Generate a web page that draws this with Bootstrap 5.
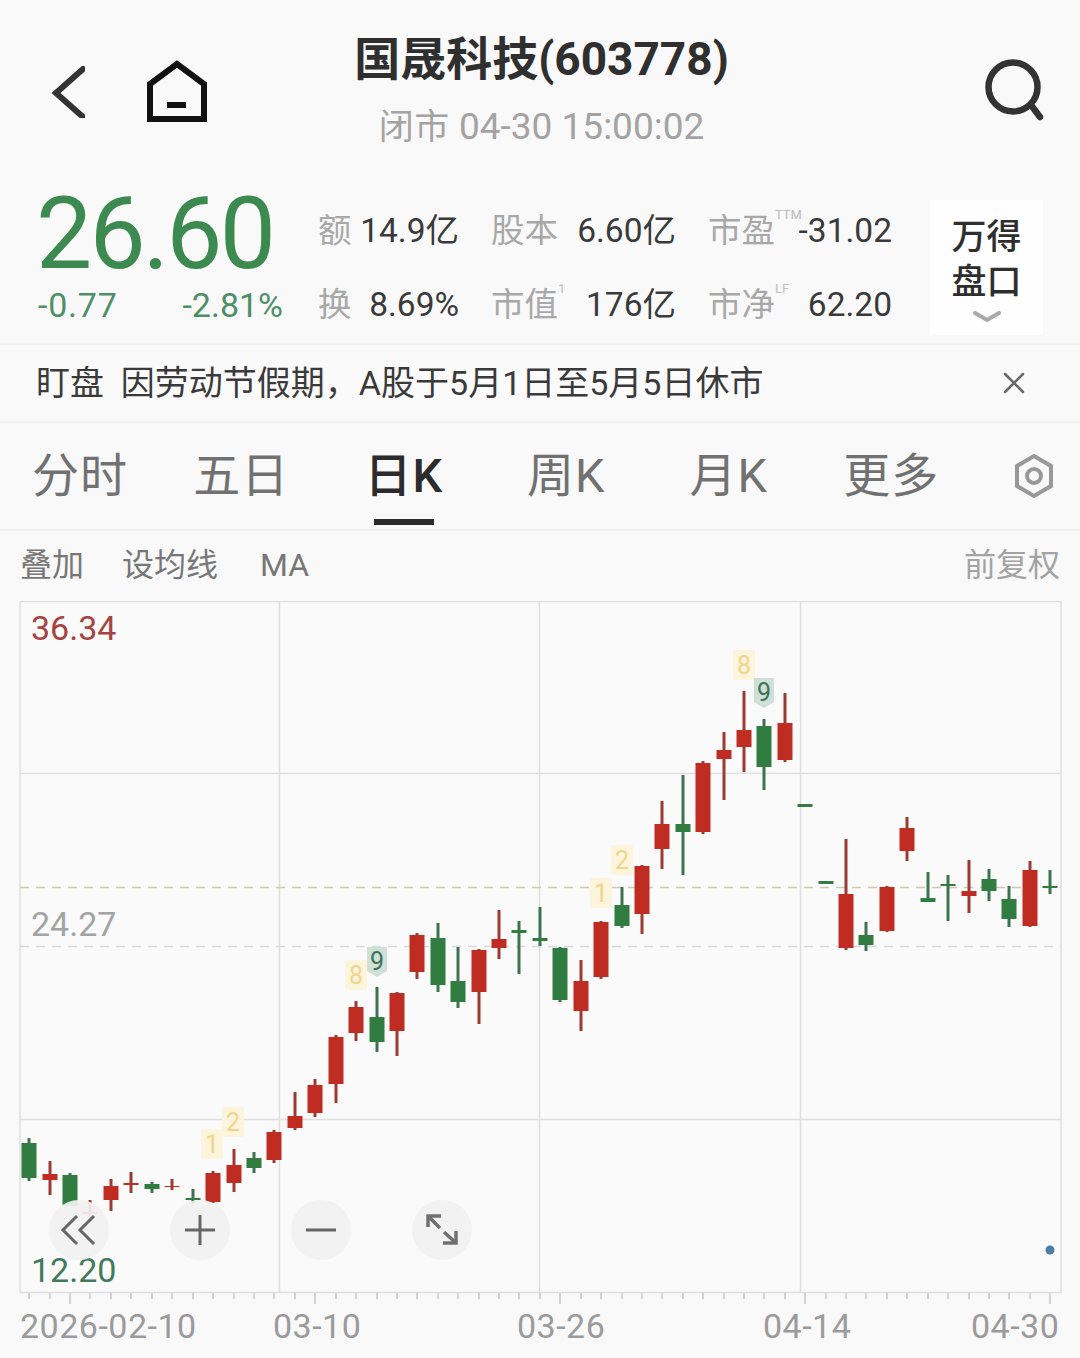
<!DOCTYPE html>
<html lang="zh-CN">

<head>
    <meta charset="UTF-8">
    <meta name="viewport" content="width=device-width, initial-scale=1.0">
    <link href="https://cdn.jsdelivr.net/npm/bootstrap@5.3.3/dist/css/bootstrap.min.css" rel="stylesheet">
    <title>国晟科技(603778)</title>
    <style>
        body {
            width: 1080px;
            height: 1358px;
            overflow: hidden;
            background: #f9f9f9;
            color: #333;
            font-family: Roboto, "Noto Sans CJK SC", sans-serif;
        }

        /* 顶部 */
        .top-bar { height: 165px; padding: 0 33px 0 51px; }
        .top-left { gap: 61px; width: 285px; padding-top: 18px; }
        .top-right { width: 300px; padding-top: 14px; }
        .top-mid { padding-top: 30px; }
        .stock-name { font-size: 46px; font-weight: 700; line-height: 58px; color: #2f2f2f; }
        .stock-time { font-size: 37px; line-height: 48px; color: #a3a3a3; margin-top: 15px; }
        .stock-time-cn { font-size: 35px; letter-spacing: .5px; }

        /* 行情 */
        .quote-row { height: 180px; padding: 0 37px 0 38px; border-bottom: 2px solid #f1f1f1; }
        .price-col { width: 245px; }
        .price-main { font-size: 100px; line-height: 94px; letter-spacing: -2.8px; color: #3c8a50; margin: 22px 0 0 -2px; }
        .price-sub { font-size: 34px; line-height: 40px; color: #4f8f68; margin-top: 4px; }
        .price-diff { letter-spacing: .8px; }
        .quote-grid {
            display: grid;
            grid-template-columns: 141px 185px 184px;
            column-gap: 32px;
            row-gap: 31px;
            font-size: 33.5px;
            line-height: 43px;
            margin-left: 35px;
            margin-top: 44px;
            align-content: start;
        }
        .q-cell { white-space: nowrap; }
        .q-label { color: #a8a8a8; position: relative; }
        .q-val { color: #3a3a3a; }
        .q-sup { position: absolute; left: 100%; top: -2px; font-size: 13px; line-height: 16px; color: #bdbdbd; }
        .depth-box {
            width: 113px;
            height: 135px;
            margin-left: 38px;
            margin-top: 35px;
            background: #fefefe;
            font-size: 35px;
            font-weight: 500;
            line-height: 45px;
            padding-top: 15px;
            color: #2e2e2e;
        }
        .depth-arrow { margin-top: 6px; }

        /* 盯盘 */
        .notice-bar { height: 78px; padding: 0 55px 0 36px; font-size: 34px; color: #3a3a3a; border-bottom: 2px solid #f1f1f1; background: #fafafa; }

        /* 周期 */
        .tab-bar { height: 108px; border-bottom: 2px solid #f1f1f1; }
        .tab-cell { width: 162.5px; height: 100%; font-size: 47px; letter-spacing: 1px; color: #717171; position: relative; }
        .tab-first { width: 160px; }
        .tab-active { color: #2b2b2b; font-weight: 500; }
        .tab-line { position: absolute; left: 50%; bottom: 4px; width: 60px; height: 6px; margin-left: -30px; background: #2b2b2b; }

        /* 工具 */
        .tool-bar { height: 70px; padding: 0 20px 2px; font-size: 32px; color: #777; }
        .tool-items { gap: 38px; }
        .tool-ma { margin-left: 4px; }
        .tool-right { color: #a3a3a3; }

        .chart-wrap { position: relative; height: 757px; }
        .chart-wrap svg.chart-svg { display: block; }
        .chart-text { font-family: Roboto, sans-serif; font-size: 34px; }
        .axis-text { letter-spacing: .5px; }
        .chart-btns { position: absolute; left: 49px; top: 599px; gap: 61px; }
        .chart-btn {
            width: 60px;
            height: 60px;
            padding: 0;
            border: 0;
            border-radius: 50%;
            background: rgba(241, 241, 241, .93);
        }
        .chart-btn svg { display: block; }
    </style>
</head>

<body>
    <!-- 顶部标题 -->
    <div class="top-bar d-flex justify-content-between">
        <div class="top-left d-flex align-items-center">
            <svg width="34" height="52" viewBox="0 0 34 52">
                <path d="M32 3 L5 27 L32 51" fill="none" stroke="#333" stroke-width="6" stroke-linecap="round" stroke-linejoin="miter" />
            </svg>
            <svg width="62" height="64" viewBox="0 0 62 64">
                <path d="M31 4 L4 24 V59 H58 V24 Z" fill="none" stroke="#111" stroke-width="6" />
                <rect x="21" y="42" width="19" height="6" fill="#111" />
            </svg>
        </div>
        <div class="top-mid text-center">
            <div class="stock-name">国晟科技(603778)</div>
            <div class="stock-time"><span class="stock-time-cn">闭市</span> 04-30 15:00:02</div>
        </div>
        <div class="top-right d-flex justify-content-end align-items-center">
            <svg width="62" height="62" viewBox="0 0 62 62">
                <circle cx="28" cy="28" r="24.5" fill="none" stroke="#333" stroke-width="6.5" />
                <path d="M46 46 L55 58" stroke="#333" stroke-width="6.5" stroke-linecap="round" />
            </svg>
        </div>
    </div>

    <!-- 行情 -->
    <div class="quote-row d-flex">
        <div class="price-col">
            <div class="price-main">26.60</div>
            <div class="price-sub d-flex justify-content-between"><span class="price-diff">-0.77</span><span>-2.81%</span></div>
        </div>
        <div class="quote-grid">
            <div class="q-cell d-flex justify-content-between"><span class="q-label">额</span><span class="q-val">14.9亿</span></div>
            <div class="q-cell d-flex justify-content-between"><span class="q-label">股本</span><span class="q-val">6.60亿</span></div>
            <div class="q-cell d-flex justify-content-between"><span class="q-label">市盈<span class="q-sup">TTM</span></span><span class="q-val">-31.02</span></div>
            <div class="q-cell d-flex justify-content-between"><span class="q-label">换</span><span class="q-val">8.69%</span></div>
            <div class="q-cell d-flex justify-content-between"><span class="q-label">市值<span class="q-sup">1</span></span><span class="q-val">176亿</span></div>
            <div class="q-cell d-flex justify-content-between"><span class="q-label">市净<span class="q-sup">LF</span></span><span class="q-val">62.20</span></div>
        </div>
        <div class="depth-box text-center">
            万得<br>盘口
            <svg class="depth-arrow d-block mx-auto" width="28" height="12" viewBox="0 0 28 12">
                <path d="M2 2 L14 9 L26 2" fill="none" stroke="#aaa" stroke-width="4" stroke-linecap="round" />
            </svg>
        </div>
    </div>

    <!-- 盯盘 -->
    <div class="notice-bar d-flex justify-content-between align-items-center">
        <span>盯盘&nbsp;&nbsp;因劳动节假期，A股于5月1日至5月5日休市</span>
        <svg width="22" height="22" viewBox="0 0 22 22">
            <path d="M2 2 L20 20 M20 2 L2 20" stroke="#666" stroke-width="2.5" stroke-linecap="round" />
        </svg>
    </div>

    <!-- 周期 -->
    <div class="tab-bar d-flex">
        <div class="tab-cell tab-first d-flex align-items-center justify-content-center">分时</div>
        <div class="tab-cell d-flex align-items-center justify-content-center">五日</div>
        <div class="tab-cell tab-active d-flex align-items-center justify-content-center">日K<span class="tab-line"></span></div>
        <div class="tab-cell d-flex align-items-center justify-content-center">周K</div>
        <div class="tab-cell d-flex align-items-center justify-content-center">月K</div>
        <div class="tab-cell d-flex align-items-center justify-content-center">更多</div>
        <div class="flex-grow-1 d-flex align-items-center justify-content-center ps-3">
            <svg width="42" height="46" viewBox="0 0 42 46">
                <path d="M21 3 L38 13 V33 L21 43 L4 33 V13 Z" fill="none" stroke="#999" stroke-width="4" />
                <circle cx="21" cy="23" r="7" fill="none" stroke="#999" stroke-width="4" />
            </svg>
        </div>
    </div>

    <!-- 工具 -->
    <div class="tool-bar d-flex justify-content-between align-items-center">
        <div class="tool-items d-flex"><span>叠加</span><span>设均线</span><span class="tool-ma">MA</span></div>
        <div class="tool-right">前复权</div>
    </div>

    <!-- K线 -->
    <div class="chart-wrap">
        <svg class="chart-svg" id="chart" width="1080" height="757" viewBox="0 601 1080 757"></svg>
        <div class="chart-btns d-flex">
            <button class="chart-btn" type="button" aria-label="后退">
                <svg width="60" height="60" viewBox="0 0 60 60"><path d="M28 16 L14 30 L28 44 M45 16 L31 30 L45 44" fill="none" stroke="#666" stroke-width="3" /></svg>
            </button>
            <button class="chart-btn" type="button" aria-label="放大">
                <svg width="60" height="60" viewBox="0 0 60 60"><path d="M15 30 H45 M30 15 V45" fill="none" stroke="#666" stroke-width="3" /></svg>
            </button>
            <button class="chart-btn" type="button" aria-label="缩小">
                <svg width="60" height="60" viewBox="0 0 60 60"><path d="M15 30 H45" fill="none" stroke="#666" stroke-width="3" /></svg>
            </button>
            <button class="chart-btn" type="button" aria-label="全屏">
                <svg width="60" height="60" viewBox="0 0 60 60"><path d="M16 27 V16 H29 M16 16 L28 28 M44 31 V43 H31 M44 43 L32 32" fill="none" stroke="#707070" stroke-width="3.5" /></svg>
            </button>
        </div>
    </div>

    <script src="https://cdn.jsdelivr.net/npm/bootstrap@5.3.3/dist/js/bootstrap.bundle.min.js"></script>
    <script>
        // x, 上影, 实体上, 实体下, 下影, 颜色
        const candles = [
            [29, 1138, 1143, 1178, 1181, 'g'], [50, 1161, 1174, 1180, 1195, 'r'], [70, 1173, 1175, 1206, 1206, 'g'],
            [90, 1200, 1212, 1214, 1222, 'r'], [111, 1179, 1186, 1200, 1211, 'r'], [131, 1172, 1183, 1185, 1193, 'r'],
            [152, 1182, 1184, 1189, 1193, 'g'], [172, 1179, 1186, 1187, 1190, 'r'], [193, 1189, 1198, 1200, 1204, 'g'],
            [213, 1171, 1173, 1202, 1203, 'r'], [234, 1149, 1165, 1183, 1192, 'r'], [254, 1152, 1158, 1168, 1173, 'g'],
            [274, 1130, 1132, 1160, 1163, 'r'], [295, 1092, 1116, 1128, 1130, 'r'], [315, 1079, 1085, 1113, 1117, 'r'],
            [336, 1035, 1037, 1084, 1103, 'r'], [356, 1001, 1007, 1033, 1041, 'r'], [377, 987, 1017, 1042, 1052, 'g'],
            [397, 992, 993, 1031, 1056, 'r'], [417, 933, 935, 972, 979, 'r'], [438, 923, 938, 985, 992, 'g'],
            [458, 947, 981, 1002, 1008, 'g'], [479, 949, 950, 992, 1024, 'r'], [499, 910, 939, 948, 959, 'r'],
            [519, 921, 930, 933, 974, 'g'], [540, 907, 938, 941, 946, 'g'], [560, 947, 948, 1000, 1002, 'g'],
            [581, 960, 981, 1011, 1031, 'r'], [601, 921, 922, 977, 979, 'r'], [622, 887, 905, 926, 928, 'g'],
            [642, 865, 866, 914, 934, 'r'], [662, 801, 824, 849, 869, 'r'], [683, 775, 824, 832, 875, 'g'],
            [703, 761, 763, 832, 834, 'r'], [724, 732, 750, 759, 800, 'r'], [744, 691, 730, 747, 772, 'r'],
            [764, 719, 726, 767, 790, 'g'], [785, 693, 723, 760, 762, 'r'], [805, 804, 804, 807, 807, 'g'],
            [826, 881, 881, 884, 884, 'g'], [846, 839, 894, 948, 950, 'r'], [866, 922, 935, 945, 951, 'g'],
            [887, 886, 887, 931, 932, 'r'], [907, 817, 828, 851, 861, 'r'], [928, 872, 898, 902, 902, 'g'],
            [948, 875, 884, 886, 921, 'g'], [969, 860, 891, 896, 913, 'r'], [989, 869, 879, 891, 901, 'g'],
            [1009, 886, 899, 919, 927, 'g'], [1030, 861, 870, 926, 927, 'r'], [1050, 870, 886, 888, 894, 'g']
        ];
        const bodyColor = { r: '#bf2c22', g: '#317c41' };
        const wickColor = { r: '#9c3a34', g: '#3c7350' };

        // 神奇九转标记: x, y, 文字, 类型
        const marks = [
            [212, 1144, '1', 'y'], [233, 1122, '2', 'y'], [356, 975, '8', 'y'], [377, 961, '9', 'g'],
            [601, 893, '1', 'y'], [622, 860, '2', 'y'], [744, 665, '8', 'y'], [764, 692, '9', 'g']
        ];

        let svg = '';

        // 网格
        const grid = '#dfdfdf';
        svg += `<rect x="20" y="601.5" width="1041" height="691" fill="#fafafa" stroke="${grid}" stroke-width="1.5"/>`;
        [279.5, 539.5, 800.5].forEach(x => {
            svg += `<line x1="${x}" y1="602" x2="${x}" y2="1292" stroke="${grid}" stroke-width="1.5"/>`;
        });
        [773.5, 1119.5].forEach(y => {
            svg += `<line x1="20" y1="${y}" x2="1061" y2="${y}" stroke="${grid}" stroke-width="1.5"/>`;
        });
        svg += `<line x1="20" y1="946.5" x2="1061" y2="946.5" stroke="#d9d9d9" stroke-width="1.5" stroke-dasharray="9 7"/>`;
        svg += `<line x1="20" y1="887.5" x2="1061" y2="887.5" stroke="#cfc9b4" stroke-width="1.5" stroke-dasharray="9 7"/>`;

        // 刻度
        candles.forEach((c, i) => {
            const major = i >= 2 && (i - 2) % 12 === 0;
            svg += `<line x1="${c[0]}" y1="1293" x2="${c[0]}" y2="${major ? 1304 : 1299}" stroke="#c4c4c4" stroke-width="1.5"/>`;
        });

        // 蜡烛
        candles.forEach(([x, wt, bt, bb, wb, k]) => {
            if (wb > wt) {
                svg += `<line x1="${x}" y1="${wt}" x2="${x}" y2="${wb}" stroke="${wickColor[k]}" stroke-width="3"/>`;
            }
            svg += `<rect x="${x - 7.5}" y="${bt}" width="15" height="${bb - bt}" fill="${bodyColor[k]}"/>`;
        });

        // 标记
        marks.forEach(([x, y, t, k]) => {
            if (k === 'y') {
                svg += `<rect x="${x - 11}" y="${y - 15}" width="22" height="30" rx="3" fill="#fdf4dc"/>`;
                svg += `<text x="${x}" y="${y + 9}" text-anchor="middle" font-family="Roboto" font-size="25" fill="#f0d48e">${t}</text>`;
            } else {
                svg += `<path d="M${x - 10} ${y - 14} H${x + 10} V${y + 10} L${x} ${y + 16} L${x - 10} ${y + 10} Z" fill="#cfe0d6"/>`;
                svg += `<text x="${x}" y="${y + 9}" text-anchor="middle" font-family="Roboto" font-size="25" fill="#3f7358">${t}</text>`;
            }
        });

        // 价格与日期
        svg += `<text class="chart-text" x="31" y="640" fill="#a8423e">36.34</text>`;
        svg += `<text class="chart-text" x="31" y="936" fill="#a3a3a3">24.27</text>`;
        svg += `<text class="chart-text" x="31" y="1282" fill="#427a5c">12.20</text>`;
        [[20, '2026-02-10'], [273, '03-10'], [517, '03-26'], [763, '04-14'], [971, '04-30']].forEach(([x, t]) => {
            svg += `<text class="chart-text axis-text" x="${x}" y="1338" fill="#9b9b9b">${t}</text>`;
        });
        svg += `<circle cx="1050" cy="1250" r="4.5" fill="#4a7ea8"/>`;

        document.getElementById('chart').innerHTML = svg;
    </script>
</body>

</html>
